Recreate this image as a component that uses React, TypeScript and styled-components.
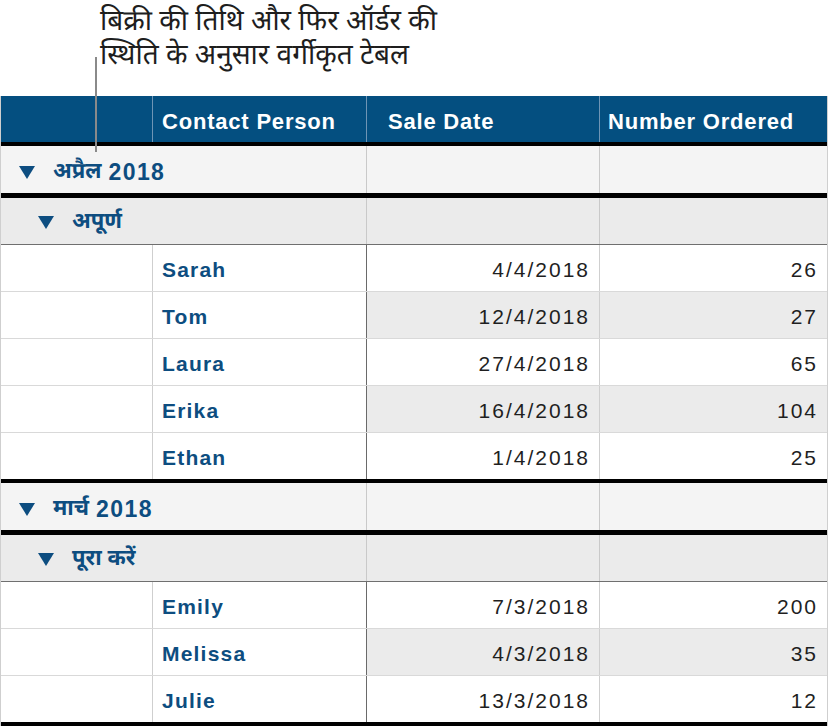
import React from "react";
import styled, { createGlobalStyle } from "styled-components";

const Global = createGlobalStyle`
  html, body { margin: 0; padding: 0; background: #ffffff; }
  body { font-family: "Liberation Sans", Arial, sans-serif; }
`;

const HINDI = `"Noto Sans Devanagari", "Lohit Devanagari", "FreeSans", "Noto Sans", "Liberation Sans", sans-serif`;
const BLUE = "#0d4d80";

const Page = styled.div`
  position: relative;
  width: 830px;
  height: 726px;
  overflow: hidden;
  display: flex;
  flex-direction: column;
`;

const Caption = styled.div`
  height: 97px;
  box-sizing: border-box;
  padding: 6px 0 0 100px;
  font-family: ${HINDI};
  font-size: 28px;
  line-height: 34px;
  color: #1e1e1e;
`;

const CaptionLine = styled.div`
  height: 34px;
  white-space: nowrap;
`;

const Leader = styled.div`
  position: absolute;
  left: 95px;
  top: 57px;
  width: 2px;
  height: 95px;
  background: #8a8a8a;
  z-index: 2;
`;

const Table = styled.div`
  width: 828px;
  box-sizing: border-box;
  border-left: 1px solid #cfcfcf;
  border-right: 1px solid #cfcfcf;
  display: flex;
  flex-direction: column;
`;

const Row = styled.div<{ $h?: number; $bottom?: string }>`
  display: grid;
  grid-template-columns: 151px 214px 233px 228px;
  height: ${(p) => p.$h ?? 46}px;
  box-sizing: content-box;
  border-bottom: ${(p) => p.$bottom ?? "none"};
`;

const HeaderRow = styled(Row)`
  background: #044f80;
`;

const HeadCell = styled.div<{ $pad?: number; $first?: boolean }>`
  display: flex;
  align-items: center;
  padding-left: ${(p) => p.$pad ?? 9}px;
  padding-top: 5px;
  border-left: ${(p) => (p.$first ? "none" : "1px solid #6f95b5")};
  color: #ffffff;
  font-weight: 700;
  font-size: 22px;
  letter-spacing: 0.8px;
  white-space: nowrap;
  box-sizing: border-box;
`;

const GroupRow = styled(Row)<{ $level: number }>`
  background: ${(p) => (p.$level === 1 ? "#f4f4f4" : "#ebebeb")};
`;

const GroupLabel = styled.div<{ $level: number }>`
  grid-column: 1 / span 2;
  display: flex;
  align-items: center;
  padding-left: ${(p) => (p.$level === 1 ? 18 : 37)}px;
  padding-top: ${(p) => (p.$level === 1 ? 5 : 2)}px;
  box-sizing: border-box;
  color: ${BLUE};
  font-family: ${HINDI};
  font-weight: 700;
  font-size: 22px;
  white-space: nowrap;
`;

const Year = styled.span`
  font-family: "Liberation Sans", Arial, sans-serif;
  font-size: 23px;
  letter-spacing: 1.4px;
  margin-left: 7px;
`;

const Tri = styled.svg`
  width: 16px;
  height: 13px;
  margin-right: 18px;
  flex: none;
`;

const EmptyCell = styled.div`
  border-left: 1px solid #c9c9c9;
`;

const Cell = styled.div<{ $alt?: boolean; $dark?: boolean; $right?: boolean; $bg?: boolean; $first?: boolean }>`
  display: flex;
  align-items: center;
  justify-content: ${(p) => (p.$right ? "flex-end" : "flex-start")};
  padding: 4px 9px 0 9px;
  box-sizing: border-box;
  border-left: ${(p) => (p.$first ? "none" : p.$dark ? "1px solid #6a6a6a" : "1px solid #cfcfcf")};
  background: ${(p) => (p.$bg && p.$alt ? "#ebebeb" : "#ffffff")};
  font-size: 21px;
  letter-spacing: 2px;
  color: #1f1f1f;
  white-space: nowrap;
`;

const Name = styled.span`
  color: ${BLUE};
  font-weight: 700;
  font-size: 21px;
  letter-spacing: 1.2px;
`;

const Triangle = () => (
  <Tri viewBox="0 0 16 13">
    <path d="M0 0 H16 L8 13 Z" fill={BLUE} />
  </Tri>
);

type Item = { name: string; date: string; num: number };

const groups: { month: string; year?: string; status: string; items: Item[] }[] = [
  {
    month: "अप्रैल",
    year: "2018",
    status: "अपूर्ण",
    items: [
      { name: "Sarah", date: "4/4/2018", num: 26 },
      { name: "Tom", date: "12/4/2018", num: 27 },
      { name: "Laura", date: "27/4/2018", num: 65 },
      { name: "Erika", date: "16/4/2018", num: 104 },
      { name: "Ethan", date: "1/4/2018", num: 25 },
    ],
  },
  {
    month: "मार्च",
    year: "2018",
    status: "पूरा करें",
    items: [
      { name: "Emily", date: "7/3/2018", num: 200 },
      { name: "Melissa", date: "4/3/2018", num: 35 },
      { name: "Julie", date: "13/3/2018", num: 12 },
    ],
  },
];

export default function App() {
  return (
    <Page>
      <Global />
      <Caption>
        <CaptionLine>बिक्री की तिथि और फिर ऑर्डर की</CaptionLine>
        <CaptionLine>स्थिति के अनुसार वर्गीकृत टेबल</CaptionLine>
      </Caption>
      <Leader />
      <Table>
        <HeaderRow $h={46} $bottom="4px solid #000">
          <HeadCell $first />
          <HeadCell>Contact Person</HeadCell>
          <HeadCell $pad={21}>Sale Date</HeadCell>
          <HeadCell $pad={8}>Number Ordered</HeadCell>
        </HeaderRow>
        {groups.map((g) => (
          <React.Fragment key={g.month}>
            <GroupRow $level={1} $h={47} $bottom="5px solid #000">
              <GroupLabel $level={1}>
                <Triangle />
                {g.month}
                {g.year && <Year>{g.year}</Year>}
              </GroupLabel>
              <EmptyCell />
              <EmptyCell />
            </GroupRow>
            <GroupRow $level={2} $h={46} $bottom="1px solid #6f6f6f">
              <GroupLabel $level={2}>
                <Triangle />
                {g.status}
              </GroupLabel>
              <EmptyCell />
              <EmptyCell />
            </GroupRow>
            {g.items.map((it, i) => {
              const last = i === g.items.length - 1;
              const alt = i % 2 === 1;
              return (
                <Row key={it.name} $h={46} $bottom={last ? "4px solid #000" : "1px solid #d9d9d9"}>
                  <Cell $first />
                  <Cell>
                    <Name>{it.name}</Name>
                  </Cell>
                  <Cell $dark $right $bg $alt={alt}>
                    {it.date}
                  </Cell>
                  <Cell $right $bg $alt={alt}>
                    {it.num}
                  </Cell>
                </Row>
              );
            })}
          </React.Fragment>
        ))}
      </Table>
    </Page>
  );
}
